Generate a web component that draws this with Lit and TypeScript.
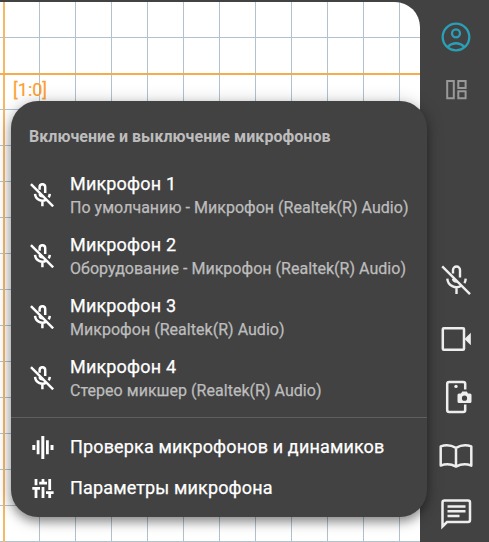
import { LitElement, html, css, svg } from "lit";
import { customElement } from "lit/decorators.js";

const micOff = (cls: string, w: number) => html`<svg class=${cls} viewBox="0 0 30 30" fill="none" stroke="currentColor" stroke-width=${w}>
  <path d="M12 8.5V5a3.5 3.5 0 0 1 7 0v7.6M12 13.6a3.7 3.7 0 0 0 4.2 2.8M6.3 13.6a9.2 9.2 0 0 0 14 7.2M24.7 13.6a9.2 9.2 0 0 1-1.3 4.5M15.5 22v7"/>
  <path d="M1.2 1.4L29 29.2"/></svg>`;

const icons = {
  account: svg`<circle cx="15" cy="15" r="13.3"/><circle cx="15" cy="11.3" r="4"/><path d="M6.3 25q8.7-7.6 17.4 0"/>`,
  layout: svg`<path d="M6.2 6h6.6v17.2H6.2zM17.3 6h7.3v7h-7.3zM17.3 16.2h7.3v7h-7.3z"/>`,
  camera: svg`<rect x="1.8" y="4.3" width="21.2" height="21.4" rx="1"/><path d="M23.5 15l6.3-6.200v12.400z" fill="currentColor" stroke="none"/>`,
  phone: svg`<path d="M24.2 7.5V2q0-2-2-2H8.2q-2 0-2 2v26q0 2 2 2h14q2 0 2-2v-5.5"/><circle cx="15" cy="4.4" r="1.7" fill="currentColor" stroke="none"/><path fill="currentColor" stroke="none" fill-rule="evenodd" d="M18 11.4h2l1.2-1.900h4.600l1.200 1.900h2q1.500 0 1.500 1.500v6.500q0 1.600-1.500 1.600H18q-1.500 0-1.500-1.600v-6.500q0-1.500 1.500-1.500zM23.500 13.600a2.600 2.600 0 1 0 0 5.200a2.600 2.600 0 0 0 0-5.200z"/>`,
  book: svg`<path stroke-linejoin="round" d="M15 6.8Q7.5 2.6-.3 5.4V24.6Q7.5 21.6 15 25.6Q22.5 21.6 30.3 24.6V5.4Q22.5 2.6 15 6.8zM15 6.8V25.6"/>`,
  chat: svg`<path d="M1.5 27.5V3.4q0-2 2-2h23.5q2 0 2 2v17.7q0 2-2 2H6z"/><path d="M6.5 7.6h18M6.5 12.3h18M6.5 16.9h12"/>`,
};

const devices = [
  ["Микрофон 1", "По умолчанию - Микрофон (Realtek(R) Audio)"],
  ["Микрофон 2", "Оборудование - Микрофон (Realtek(R) Audio)"],
  ["Микрофон 3", "Микрофон (Realtek(R) Audio)"],
  ["Микрофон 4", "Стерео микшер (Realtek(R) Audio)"],
];

@customElement("mic-menu")
class MicMenu extends LitElement {
  static styles = css`
    :host { display: block; box-sizing: border-box; background: #424242; border-radius: 27px; color: #fff; overflow: hidden;
      box-shadow: 0 5px 10px rgba(0,0,0,.34), 0 2px 18px rgba(0,0,0,.22); padding-top: 25px; white-space: nowrap; }
    .title { margin: 0 0 0 18px; height: 42px; line-height: 22px; font-size: 16px; font-weight: 700; color: #bdbdbd; letter-spacing: .04px; }
    .device { display: flex; height: 61px; padding-left: 19px; gap: 16px; box-sizing: border-box; }
    .mic { width: 24px; height: 24px; margin-top: 15px; flex: none; }
    .name { font-size: 18px; line-height: 24px; margin-top: 4px; letter-spacing: .17px; -webkit-text-stroke: .25px; }
    .desc { font-size: 16px; line-height: 22px; margin-top: 1px; color: #bdbdbd; letter-spacing: .03px; -webkit-text-stroke: .25px; }
    .rule { height: 1px; background: #5e5e5e; margin-top: 5px; margin-bottom: 8px; }
    .action { display: flex; height: 41px; align-items: center; padding-left: 19px; gap: 16px; font-size: 18px; letter-spacing: .15px; -webkit-text-stroke: .25px; }
    .glyph { width: 24px; height: 24px; flex: none; }
  `;
  render() {
    return html`<div class="title">Включение и выключение микрофонов</div>
      ${devices.map(([n, d]) => html`<div class="device">${micOff("mic", 3.1)}
        <div><div class="name">${n}</div><div class="desc">${d}</div></div></div>`)}
      <div class="rule"></div>
      <div class="action"><svg class="glyph" viewBox="0 0 24 24" fill="currentColor"><path d="M2.3 10h3v5h-3zM6.7 5.3h2.8v14H6.7zM11.3 1h3v23h-3zM16 5.3h2.8v14H16zM20.5 10h3v5h-3z"/></svg><span>Проверка микрофонов и динамиков</span></div>
      <div class="action"><svg class="glyph" viewBox="0 0 24 24" fill="currentColor"><path d="M4.6 3h2.8v6.3H4.6zM2.3 11h7.7v2.7H7.4V22H4.6v-8.3H2.3zM11.6 3h2.8v2.7H17v2.7H9.2V5.7h2.4zM11.6 11h2.8v11h-2.8zM18.3 3h2.8v11h-2.8zM16 15.3h7.6V18h-2.5v4h-2.8v-4H16z"/></svg><span>Параметры микрофона</span></div>`;
  }
}

@customElement("side-bar")
class SideBar extends LitElement {
  static styles = css`
    :host { display: flex; flex-direction: column; align-items: center; box-sizing: border-box; padding: 22px 0 13px 2px; color: #eee; }
    svg { display: block; width: 30px; height: 30px; overflow: visible; flex: none; }
    .account { color: #2a9fb8; }
    .layout { color: #999; margin-top: 23px; }
    .tools { margin-top: auto; display: flex; flex-direction: column; gap: 28.5px; }
  `;
  icon(name: keyof typeof icons, w = 2.5) {
    return html`<svg class=${name} viewBox="0 0 30 30" fill="none" stroke="currentColor" stroke-width=${w}>${icons[name]}</svg>`;
  }
  render() {
    return html`${this.icon("account", 2.3)}${this.icon("layout", 2)}
      <div class="tools">${micOff("micoff", 2.4)}${this.icon("camera")}${this.icon("phone")}${this.icon("book")}${this.icon("chat")}</div>`;
  }
}

@customElement("app-root")
class AppRoot extends LitElement {
  static styles = css`
    :host { display: flex; position: relative; width: 489px; height: 542px; overflow: hidden; background: #424242; font-family: Roboto, sans-serif; }
    .board { width: 420px; height: 540px; margin-top: 2px; flex: none; border-top-right-radius: 25px; box-sizing: border-box; padding: 77px 0 0 13px;
      background:
        linear-gradient(#f5ad4b, #f5ad4b) 0 71px / 100% 2px no-repeat,
        linear-gradient(#f5b865, #f5b865) 3px 0 / 2px 100% no-repeat,
        repeating-linear-gradient(to bottom, transparent 0 35px, #afc3cf 35px 36px),
        repeating-linear-gradient(to right, transparent 0 35px, #afc3cf 35px 36px) 4px 0,
        #fff; }
    .cell { color: #ff9f2e; font-size: 18px; line-height: 22px; -webkit-text-stroke: .2px; }
    side-bar { flex: 1; }
    mic-menu { position: absolute; left: 11px; top: 101px; width: 416px; height: 416px; }
  `;
  render() {
    return html`<div class="board"><div class="cell">[1:0]</div></div><side-bar></side-bar><mic-menu></mic-menu>`;
  }
}
